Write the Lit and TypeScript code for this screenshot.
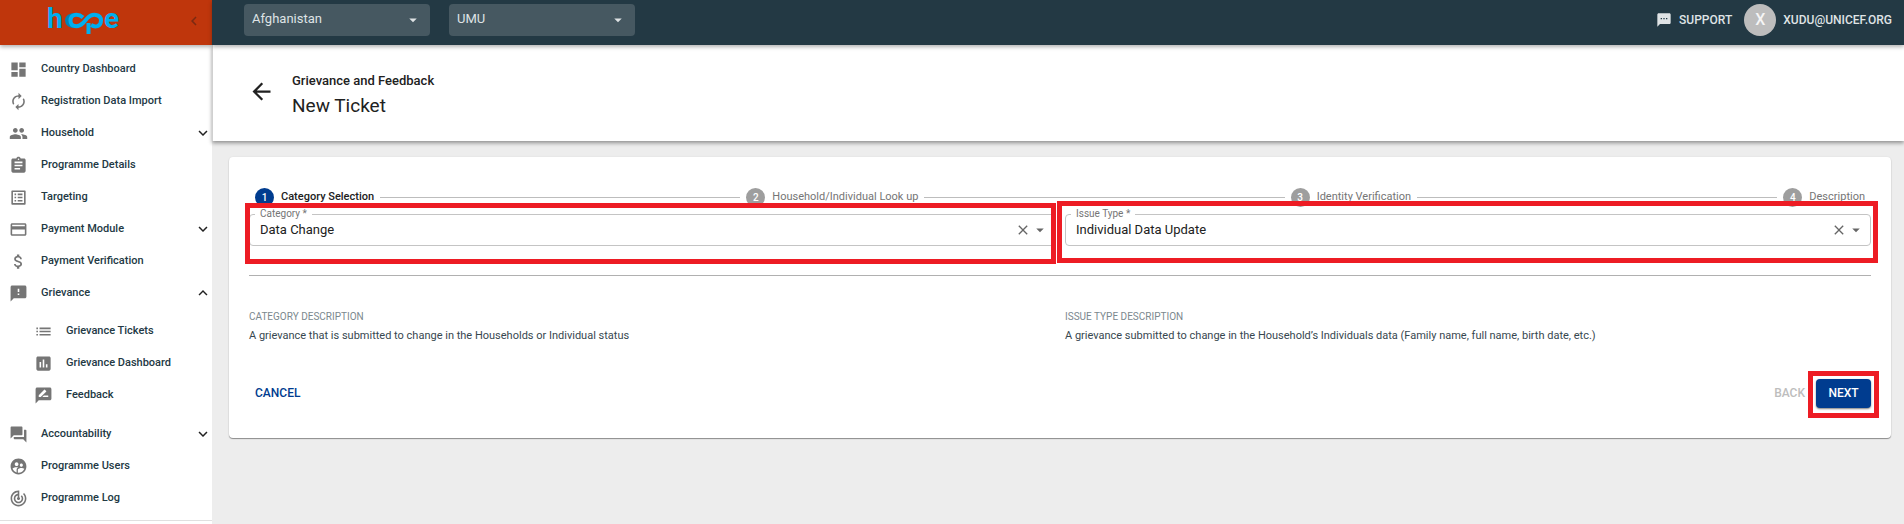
import { LitElement, html, css, svg } from "lit";
import { customElement, property } from "lit/decorators.js";

const ICONS: Record<string, string> = {
  dashboard: "M3 13h8V3H3v10zm0 8h8v-6H3v6zm10 0h8V11h-8v10zm0-18v6h8V3h-8z",
  autorenew: "M12 6v3l4-4-4-4v3c-4.42 0-8 3.58-8 8 0 1.57.46 3.03 1.24 4.26L6.7 14.8c-.45-.83-.7-1.79-.7-2.8 0-3.31 2.69-6 6-6zm6.76 1.74L17.3 9.2c.44.84.7 1.79.7 2.8 0 3.31-2.69 6-6 6v-3l-4 4 4 4v-3c4.42 0 8-3.58 8-8 0-1.57-.46-3.03-1.24-4.26z",
  people: "M16 11c1.66 0 2.99-1.34 2.99-3S17.66 5 16 5c-1.66 0-3 1.34-3 3s1.34 3 3 3zm-8 0c1.66 0 2.99-1.34 2.99-3S9.66 5 8 5C6.34 5 5 6.34 5 8s1.34 3 3 3zm0 2c-2.33 0-7 1.17-7 3.5V19h14v-2.5c0-2.33-4.67-3.5-7-3.5zm8 0c-.29 0-.62.02-.97.05 1.16.84 1.97 1.97 1.97 3.45V19h6v-2.5c0-2.33-4.67-3.5-7-3.5z",
  assignment: "M19 3h-4.18C14.4 1.84 13.3 1 12 1c-1.3 0-2.4.84-2.82 2H5c-1.1 0-2 .9-2 2v14c0 1.1.9 2 2 2h14c1.1 0 2-.9 2-2V5c0-1.1-.9-2-2-2zm-7 0c.55 0 1 .45 1 1s-.45 1-1 1-1-.45-1-1 .45-1 1-1zm2 14H7v-2h7v2zm3-4H7v-2h10v2zm0-4H7V7h10v2z",
  listAlt: "M19 5v14H5V5h14m1.1-2H3.9c-.5 0-.9.4-.9.9v16.2c0 .4.4.9.9.9h16.2c.4 0 .9-.5.9-.9V3.9c0-.5-.5-.9-.9-.9zM11 7h6v2h-6V7zm0 4h6v2h-6v-2zm0 4h6v2h-6zM7 7h2v2H7zm0 4h2v2H7zm0 4h2v2H7z",
  payment: "M20 4H4c-1.11 0-1.99.89-1.99 2L2 18c0 1.11.89 2 2 2h16c1.11 0 2-.89 2-2V6c0-1.11-.89-2-2-2zm0 14H4v-6h16v6zm0-10H4V6h16v2z",
  money: "M11.8 10.9c-2.27-.59-3-1.2-3-2.15 0-1.09 1.01-1.85 2.7-1.85 1.78 0 2.44.85 2.5 2.1h2.21c-.07-1.72-1.12-3.3-3.21-3.81V3h-3v2.16c-1.94.42-3.5 1.68-3.5 3.61 0 2.31 1.91 3.46 4.7 4.13 2.5.6 3 1.48 3 2.41 0 .69-.49 1.79-2.7 1.79-2.06 0-2.87-.92-2.98-2.1h-2.2c.12 2.19 1.76 3.42 3.68 3.83V21h3v-2.15c1.95-.37 3.5-1.5 3.5-3.55 0-2.84-2.43-3.81-4.7-4.4z",
  feedback: "M20 2H4c-1.1 0-1.99.9-1.99 2L2 22l4-4h14c1.1 0 2-.9 2-2V4c0-1.1-.9-2-2-2zm-7 12h-2v-2h2v2zm0-4h-2V6h2v4z",
  list: "M3 13h2v-2H3v2zm0 4h2v-2H3v2zm0-8h2V7H3v2zm4 4h14v-2H7v2zm0 4h14v-2H7v2zM7 7v2h14V7H7z",
  assessment: "M19 3H5c-1.1 0-2 .9-2 2v14c0 1.1.9 2 2 2h14c1.1 0 2-.9 2-2V5c0-1.1-.9-2-2-2zM9 17H7v-7h2v7zm4 0h-2V7h2v10zm4 0h-2v-4h2v4z",
  rateReview: "M20 2H4c-1.1 0-1.99.9-1.99 2L2 22l4-4h14c1.1 0 2-.9 2-2V4c0-1.1-.9-2-2-2zM6 14v-2.47l6.88-6.88c.2-.2.51-.2.71 0l1.77 1.77c.2.2.2.51 0 .71L8.47 14H6zm12 0h-7.5l2-2H18v2z",
  forum: "M21 6h-2v9H6v2c0 .55.45 1 1 1h11l4 4V7c0-.55-.45-1-1-1zm-4 6V3c0-.55-.45-1-1-1H3c-.55 0-1 .45-1 1v14l4-4h10c.55 0 1-.45 1-1z",
  supervised: "M11.99 2c-5.52 0-10 4.48-10 10s4.48 10 10 10 10-4.48 10-10-4.48-10-10-10zm3.61 6.34c1.07 0 1.93.86 1.93 1.93 0 1.07-.86 1.93-1.93 1.93-1.07 0-1.93-.86-1.93-1.93-.01-1.07.86-1.93 1.93-1.93zm-6-1.58c1.3 0 2.36 1.06 2.36 2.36 0 1.3-1.06 2.36-2.36 2.36s-2.36-1.06-2.36-2.36c0-1.31 1.05-2.36 2.36-2.36zm0 9.13v3.75c-2.4-.75-4.3-2.6-5.14-4.96 1.05-1.12 3.67-1.69 5.14-1.69.53 0 1.2.08 1.9.22-1.64.87-1.9 2.02-1.9 2.68zM11.99 20c-.27 0-.53-.01-.79-.04v-4.07c0-1.42 2.94-2.13 4.4-2.13 1.07 0 2.92.39 3.84 1.15-1.17 2.97-4.06 5.09-7.45 5.09z",
  track: "M19.07 4.93l-1.41 1.41C19.1 7.79 20 9.79 20 12c0 4.42-3.58 8-8 8s-8-3.58-8-8c0-4.08 3.05-7.44 7-7.93v2.02C8.16 6.57 6 9.03 6 12c0 3.31 2.69 6 6 6s6-2.69 6-6c0-1.66-.67-3.16-1.76-4.24l-1.41 1.41C15.55 9.9 16 10.9 16 12c0 2.21-1.79 4-4 4s-4-1.79-4-4c0-1.86 1.28-3.41 3-3.86v2.14c-.6.35-1 .98-1 1.72 0 1.1.9 2 2 2s2-.9 2-2c0-.74-.4-1.38-1-1.72V2h-1C6.48 2 2 6.48 2 12s4.48 10 10 10 10-4.48 10-10c0-2.76-1.12-5.26-2.93-7.07z",
  back: "M20 11H7.83l5.59-5.59L12 4l-8 8 8 8 1.41-1.41L7.83 13H20v-2z",
  expandMore: "M16.59 8.59L12 13.17 7.41 8.59 6 10l6 6 6-6z",
  expandLess: "M12 8l-6 6 1.41 1.41L12 10.83l4.59 4.58L18 14z",
  chevronLeft: "M15.41 7.41L14 6l-6 6 6 6 1.41-1.41L10.83 12z",
  dropDown: "M7 10l5 5 5-5z",
  close: "M19 6.41L17.59 5 12 10.59 6.41 5 5 6.41 10.59 12 5 17.59 6.41 19 12 13.41 17.59 19 19 17.59 13.41 12z",
  sms: "M20 2H4c-1.1 0-1.99.9-1.99 2L2 22l4-4h14c1.1 0 2-.9 2-2V4c0-1.1-.9-2-2-2zM9 11H7V9h2v2zm4 0h-2V9h2v2zm4 0h-2V9h2v2z",
};

const icon = (name: string, size = 19) => svg`
  <svg class="icon" width=${size} height=${size} viewBox="0 0 24 24" fill="currentColor" aria-hidden="true">
    <path d=${ICONS[name]}></path>
  </svg>`;

const shared = css`
  :host {
    font-family: Roboto, "Liberation Sans", sans-serif;
    box-sizing: border-box;
  }
  *, *::before, *::after { box-sizing: border-box; }
  .icon { display: block; flex: none; }
  button { font: inherit; border: 0; padding: 0; background: none; cursor: pointer; color: inherit; }
  a { color: inherit; text-decoration: none; }
`;

interface NavEntry {
  label: string;
  icon: string;
  open?: boolean;
  children?: NavEntry[];
}

const NAV: NavEntry[] = [
  { label: "Country Dashboard", icon: "dashboard" },
  { label: "Registration Data Import", icon: "autorenew" },
  { label: "Household", icon: "people", open: false },
  { label: "Programme Details", icon: "assignment" },
  { label: "Targeting", icon: "listAlt" },
  { label: "Payment Module", icon: "payment", open: false },
  { label: "Payment Verification", icon: "money" },
  {
    label: "Grievance",
    icon: "feedback",
    open: true,
    children: [
      { label: "Grievance Tickets", icon: "list" },
      { label: "Grievance Dashboard", icon: "assessment" },
      { label: "Feedback", icon: "rateReview" },
    ],
  },
  { label: "Accountability", icon: "forum", open: false },
  { label: "Programme Users", icon: "supervised" },
  { label: "Programme Log", icon: "track" },
];

@customElement("side-nav")
export class SideNav extends LitElement {
  static styles = [
    shared,
    css`
      :host { display: flex; flex-direction: column; background: #fff; }
      .brand {
        height: 45px;
        display: flex;
        align-items: center;
        justify-content: space-between;
        padding: 0 9px 8px 44px;
        background: #bf360c;
        color: #7a2a12;
        box-shadow: 0 2px 4px rgba(0, 0, 0, 0.3);
      }
      .menu { list-style: none; margin: 0; padding: 8px 0 6px; border-bottom: 1px solid #e0e0e0; }
      .sub { list-style: none; margin: 0; padding: 6px 0 7px; }
      .link {
        display: flex;
        align-items: center;
        height: 32px;
        padding: 0 0 0 9px;
        color: #233944;
        font-size: 11px;
        font-weight: 500;
        line-height: 16px;
      }
      .link .icon { color: #757575; }
      .text { flex: 1; padding-left: 13px; }
      .sub .link { padding-left: 34px; }
      .toggle .icon { color: #212121; }
      .brand button { margin-top: 4px; }
      .logo { display: block; }
      .letter { font: 700 28px Roboto, sans-serif; fill: #00aeef; }
    `,
  ];

  private entry(item: NavEntry): unknown {
    return html`<li>
      <a class="link" href="#">
        ${icon(item.icon)}
        <span class="text">${item.label}</span>
        ${item.open === undefined
          ? ""
          : html`<span class="toggle">${icon(item.open ? "expandLess" : "expandMore", 18)}</span>`}
      </a>
      ${item.children ? html`<ul class="sub">${item.children.map((c) => this.entry(c))}</ul>` : ""}
    </li>`;
  }

  render() {
    return html`
      <div class="brand">
        <svg class="logo" width="80" height="36" viewBox="0 0 80 36" role="img" aria-label="hope">
          <text class="letter" x="3" y="27">h</text>
          <g fill="none" stroke-width="4">
            <path stroke="#0083b3" d="M32 14C20 13 20 26 32 25"></path>
            <path stroke="#00aeef" d="M39 16.500C34 12 26.500 13 26.500 19.500C26.500 26 34 27 39 22L43.500 17C48 12 57 13 57 19.500C57 26 51 26.500 47 24"></path>
            <path stroke="#00aeef" d="M44.500 33V22"></path>
          </g>
          <text class="letter" x="60" y="27">e</text>
        </svg>
        <button aria-label="Collapse menu">${icon("chevronLeft", 18)}</button>
      </div>
      <nav><ul class="menu">${NAV.map((n) => this.entry(n))}</ul></nav>
    `;
  }
}

@customElement("top-bar")
export class TopBar extends LitElement {
  static styles = [
    shared,
    css`
      :host {
        display: flex;
        align-items: flex-start;
        justify-content: space-between;
        height: 45px;
        padding: 4px 12px 0 32px;
        background: #233944;
        color: #dfe3e5;
        position: relative;
        box-shadow: 0 2px 4px rgba(0, 0, 0, 0.3);
      }
      .scopes { display: flex; gap: 19px; }
      .scope { display: grid; align-items: center; width: 186px; }
      .scope > * { grid-area: 1 / 1; }
      .scope .icon { justify-self: end; margin-right: 8px; pointer-events: none; }
      select {
        appearance: none;
        width: 100%;
        height: 32px;
        padding: 0 24px 2px 8px;
        border: 0;
        border-radius: 4px;
        background: #465861;
        color: #dfe3e5;
        font: 400 13px/16px Roboto, sans-serif;
      }
      .account { display: flex; align-items: center; font-size: 12px; line-height: 16px; font-weight: 500; height: 32px; }
      .support, .user { display: flex; align-items: center; gap: 7px; }
      .support { margin-right: 12px; }
      .avatar {
        width: 32px;
        height: 32px;
        border-radius: 50%;
        background: #bdbdbd;
        color: #f5f5f5;
        display: grid;
        place-items: center;
        font-size: 16px;
      }
    `,
  ];

  render() {
    return html`
      <div class="scopes">
        <div class="scope">
          <select aria-label="Business area"><option>Afghanistan</option></select>
          ${icon("dropDown", 18)}
        </div>
        <div class="scope">
          <select aria-label="Programme"><option>UMU</option></select>
          ${icon("dropDown", 18)}
        </div>
      </div>
      <div class="account">
        <a class="support" href="#">${icon("sms", 16)}SUPPORT</a>
        <button class="user"><span class="avatar">X</span>XUDU@UNICEF.ORG</button>
      </div>
    `;
  }
}

@customElement("choice-field")
export class ChoiceField extends LitElement {
  @property() label = "";
  @property() value = "";

  static styles = [
    shared,
    css`
      :host { display: block; }
      .field {
        position: relative;
        display: flex;
        align-items: center;
        height: 32px;
        padding: 0 5px 0 10px;
        border: 1px solid #c4c4c4;
        border-radius: 4px;
        color: #666;
      }
      label {
        position: absolute;
        left: 5px;
        top: -7px;
        padding: 0 5px;
        background: #fff;
        color: #757575;
        font-size: 10px;
        line-height: 12px;
      }
      input {
        flex: 1;
        min-width: 0;
        border: 0;
        padding: 0;
        outline: 0;
        background: none;
        color: #212121;
        font: 400 13px/20px Roboto, sans-serif;
      }
    `,
  ];

  render() {
    return html`<div class="field">
      <label for="control">${this.label} *</label>
      <input id="control" .value=${this.value} />
      <button aria-label="Clear">${icon("close", 16)}</button>
      <button aria-label="Open">${icon("dropDown", 18)}</button>
    </div>`;
  }
}

const STEPS = ["Category Selection", "Household/Individual Look up", "Identity Verification", "Description"];

@customElement("app-root")
export class AppRoot extends LitElement {
  static styles = [
    shared,
    css`
      :host {
        display: grid;
        grid-template-columns: 212px 1fr;
        min-height: 100vh;
        background: #ededed;
      }
      .page-head {
        display: flex;
        align-items: center;
        gap: 17px;
        height: 96px;
        padding: 0 36px 4px 35px;
        border-left: 1px solid #d0d0d0;
        background: #fff;
        box-shadow: 0 2px 4px rgba(0, 0, 0, 0.4);
        color: #212121;
      }
      .titles { padding-top: 11px; }
      .crumb { font-size: 13px; line-height: 16px; font-weight: 500; }
      h1 { margin: 3px 0 0; font-size: 19px; line-height: 28px; font-weight: 400; }
      .card {
        margin: 16px 13px 16px 17px;
        padding: 30px 20px 30px;
        border-radius: 4px;
        background: #fff;
        box-shadow: 0 1px 1px rgba(0, 0, 0, 0.4), 0 0 2px rgba(0, 0, 0, 0.08);
      }
      .stepper { display: flex; align-items: center; list-style: none; margin: 0; padding: 0; }
      .step {
        display: flex;
        align-items: center;
        gap: 7px;
        padding: 0 6px;
        font-size: 11px;
        line-height: 20px;
        color: #757575;
      }
      .dot {
        display: grid;
        place-items: center;
        width: 19px;
        height: 19px;
        border-radius: 50%;
        background: #9e9e9e;
        color: #fff;
        font-size: 10px;
        font-weight: 500;
      }
      .step.active { color: #212121; font-weight: 500; }
      .active .dot { background: #003c8f; }
      .line { flex: 1; height: 1px; background: #bdbdbd; }
      .columns { display: grid; grid-template-columns: 1fr 1fr; column-gap: 10px; }
      .fields { margin-top: 7px; padding-bottom: 29px; border-bottom: 1px solid #b0b0b0; }
      .slot { position: relative; }
      /* Highlight frames lie over the controls they point at. */
      .mark { position: absolute; border: 5px solid #ed1c24; pointer-events: none; }
      .mark.category { inset: -11px -1px -18px -4px; }
      .mark.issue { inset: -13px -7px -17px -8px; }
      .mark.next { inset: -8px -8px -10px; }
      dl { margin: 33px 0 0; }
      dt { font-size: 10px; line-height: 16px; color: #7b888e; }
      dd { margin: 1px 0 0; font-size: 11px; line-height: 20px; color: #37474f; }
      .actions { display: flex; justify-content: space-between; align-items: center; margin-top: 32px; font-size: 12px; line-height: 16px; font-weight: 500; }
      .cancel { padding: 7px 6px; color: #003c8f; }
      .end { display: flex; align-items: center; }
      .prev { padding: 7px 11px 7px 6px; color: #bdbdbd; }
      .go {
        height: 29px;
        width: 55px;
        border-radius: 4px;
        background: #003c8f;
        color: #fff;
        box-shadow: 0 1px 2px rgba(0, 0, 0, 0.5);
      }
    `,
  ];

  render() {
    return html`
      <side-nav></side-nav>
      <div>
        <top-bar></top-bar>
        <header class="page-head">
          <button aria-label="Back">${icon("back", 27)}</button>
          <div class="titles">
            <div class="crumb">Grievance and Feedback</div>
            <h1>New Ticket</h1>
          </div>
        </header>
        <main class="card">
          <ol class="stepper">
            ${STEPS.map(
              (s, i) => html`
                ${i ? html`<li class="line" role="presentation"></li>` : ""}
                <li class="step ${i ? "" : "active"}"><span class="dot">${i + 1}</span>${s}</li>
              `
            )}
          </ol>
          <div class="columns fields">
            <div class="slot">
              <choice-field label="Category" value="Data Change"></choice-field>
              <div class="mark category"></div>
            </div>
            <div class="slot">
              <choice-field label="Issue Type" value="Individual Data Update"></choice-field>
              <div class="mark issue"></div>
            </div>
          </div>
          <dl class="columns">
            <div>
              <dt>CATEGORY DESCRIPTION</dt>
              <dd>A grievance that is submitted to change in the Households or Individual status</dd>
            </div>
            <div>
              <dt>ISSUE TYPE DESCRIPTION</dt>
              <dd>A grievance submitted to change in the Household’s Individuals data (Family name, full name, birth date, etc.)</dd>
            </div>
          </dl>
          <div class="actions">
            <button class="cancel">CANCEL</button>
            <div class="end">
              <button class="prev" disabled>BACK</button>
              <div class="slot">
                <button class="go">NEXT</button>
                <div class="mark next"></div>
              </div>
            </div>
          </div>
        </main>
      </div>
    `;
  }
}
